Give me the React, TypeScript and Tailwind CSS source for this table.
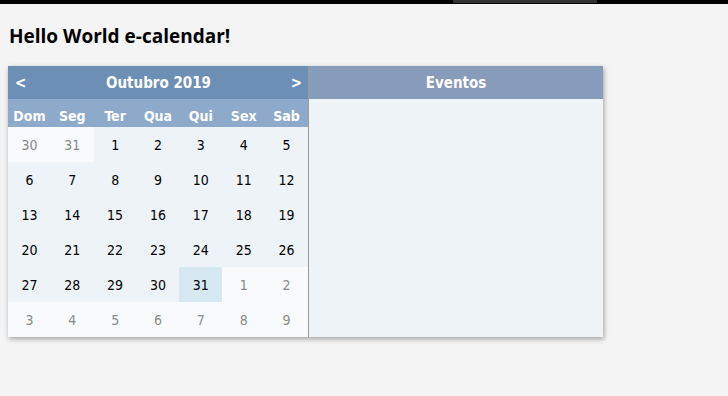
import React from "react";

type Cell = { day: number; muted?: boolean; today?: boolean };

const weekDays = ["Dom", "Seg", "Ter", "Qua", "Qui", "Sex", "Sab"];

function buildMonth(): Cell[][] {
  const cells: Cell[] = [
    { day: 30, muted: true },
    { day: 31, muted: true },
  ];
  for (let d = 1; d <= 31; d++) cells.push({ day: d, today: d === 31 });
  for (let d = 1; cells.length < 42; d++) cells.push({ day: d, muted: true });
  const rows: Cell[][] = [];
  for (let i = 0; i < 42; i += 7) rows.push(cells.slice(i, i + 7));
  return rows;
}

const calFont = { fontFamily: '"DejaVu Sans Condensed", "DejaVu Sans", Tahoma, sans-serif' };

export default function App() {
  const rows = buildMonth();
  return (
    <div className="min-h-[396px] bg-[#f4f4f4]">
      <div className="h-[4px] bg-black">
        <div className="ml-[453px] h-[3px] w-[144px] bg-[#333333]" />
      </div>
      <h1
        className="pl-[9px] pt-[20px] text-[19px] font-bold leading-[24px] text-black"
        style={{ fontFamily: '"Open Sans", sans-serif' }}
      >
        Hello World e-calendar!
      </h1>
      <div
        className="ml-[8px] mt-[18px] flex w-[595px] shadow-[1px_2px_5px_rgba(0,0,0,0.35)]"
        style={calFont}
      >
        <div className="w-[301px] border-r border-[#9a9a9a]">
          <div className="flex h-[33px] items-center justify-between bg-[#6d8fb6] pl-[7px] pr-[6px] pt-[2px] text-[15px] font-bold text-white">
            <span>&lt;</span>
            <span>Outubro 2019</span>
            <span>&gt;</span>
          </div>
          <div className="grid h-[28px] grid-cols-7 bg-[#8eaacb] pt-[8px] text-[14px] font-bold leading-[18px] text-white">
            {weekDays.map((w) => (
              <div key={w} className="text-center">
                {w}
              </div>
            ))}
          </div>
          {rows.map((row, i) => (
            <div key={i} className="grid grid-cols-7">
              {row.map((c, j) => (
                <div
                  key={j}
                  className={
                    "flex h-[35px] items-center justify-center pt-[1px] text-[14px] " +
                    (c.muted
                      ? "bg-[#f8fafc] text-[#8a8a8a]"
                      : c.today
                      ? "bg-[#d6e8f0] text-black"
                      : "bg-[#eef3f8] text-black")
                  }
                >
                  {c.day}
                </div>
              ))}
            </div>
          ))}
        </div>
        <div className="flex flex-1 flex-col bg-[#eef3f8]">
          <div className="flex h-[33px] items-center justify-center bg-[#879bba] pt-[2px] text-[15px] font-bold text-white">
            Eventos
          </div>
        </div>
      </div>
    </div>
  );
}
